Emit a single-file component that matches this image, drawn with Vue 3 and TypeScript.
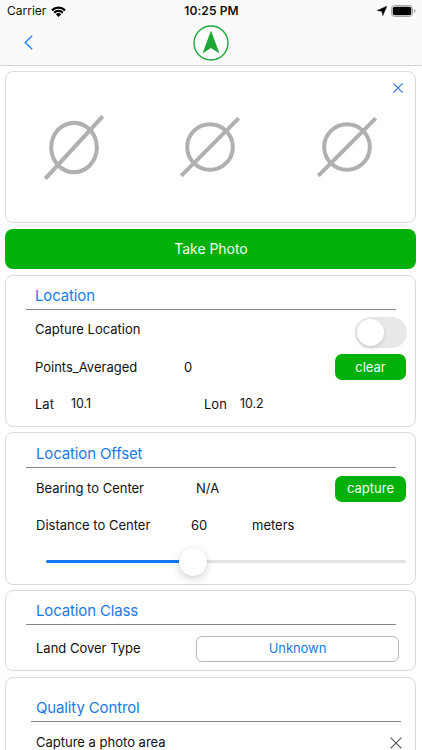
<script setup lang="ts">
import { ref } from 'vue'

const photos = [
  { id: 1, width: 60, height: 65 },
  { id: 2, width: 60, height: 60 },
  { id: 3, width: 60, height: 60 },
]
const captureLocation = ref(false)
const pointsAveraged = ref(0)
const lat = ref('10.1')
const lon = ref('10.2')
const bearing = ref('N/A')
const distance = ref(60)
const sliderPercent = ref(40.9)
const landCover = ref('Unknown')
</script>

<template>
  <div class="screen">
    <header class="header">
      <div class="status">
        <div class="carrier">
          <span>Carrier</span>
          <svg class="wifi" viewBox="0 0 15 11">
            <path d="M0.2 3.5A10.2 10.2 0 0 1 14.8 3.5L13.2 5.2A8 8 0 0 0 1.8 5.2Z" />
            <path d="M2.5 5.9A7 7 0 0 1 12.5 5.9L11 7.5A5 5 0 0 0 4 7.5Z" />
            <path d="M4.8 8.3A3.8 3.8 0 0 1 10.2 8.3L7.5 11Z" />
          </svg>
        </div>
        <div class="time">10:25 PM</div>
        <div class="indicators">
          <svg class="arrow" viewBox="0 0 10 10"><path d="M9.8 0.2L5.8 9.6L4.9 5.3L0.3 4.5Z" stroke="#000" stroke-width="0.5" /></svg>
          <svg class="battery" viewBox="0 0 25 12">
            <rect x="0.5" y="0.5" width="21" height="11" rx="3" fill="none" stroke="#a5a5a5" />
            <rect x="1.7" y="1.8" width="18.6" height="8.4" rx="1.8" fill="#000" />
            <path d="M23 4V8Q24.5 7.3 24.5 6T23 4Z" fill="#a0a0a0" />
          </svg>
        </div>
      </div>
      <nav class="nav">
        <svg class="back" viewBox="0 0 9 15"><path d="M8.2 0.8L1.2 7.5L8.2 14.2" /></svg>
        <svg class="logo" viewBox="0 0 36 36">
          <circle cx="18" cy="18" r="17" />
          <path d="M18 5.5L26.5 28.5L18 23L9.5 28.5Z" />
        </svg>
      </nav>
    </header>

    <main class="content">
      <section class="card photos">
        <div v-for="p in photos" :key="p.id" class="photo">
          <svg :width="p.width" :height="p.height" viewBox="0 0 60 60" preserveAspectRatio="none">
            <circle cx="30" cy="30" r="22.8" />
            <path d="M1.3 58.7L58.7 1.3" />
          </svg>
        </div>
        <svg class="close" viewBox="0 0 10 10"><path d="M0.4 0.4L9.6 9.6M9.6 0.4L0.4 9.6" /></svg>
      </section>

      <button class="take">Take Photo</button>

      <section class="card location">
        <h2 class="title">Location</h2>
        <div class="row toggle-row">
          <span class="label">Capture Location</span>
          <span class="toggle" :class="{ on: captureLocation }"><i></i></span>
        </div>
        <div class="row points-row">
          <span class="label">Points_Averaged</span>
          <span>{{ pointsAveraged }}</span>
          <button class="small">clear</button>
        </div>
        <div class="row coords">
          <span class="label">Lat</span><span class="num">{{ lat }}</span>
          <span>Lon</span><span class="num">{{ lon }}</span>
        </div>
      </section>

      <section class="card offset">
        <h2 class="title">Location Offset</h2>
        <div class="row bearing-row">
          <span class="label">Bearing to Center</span>
          <span>{{ bearing }}</span>
          <button class="small">capture</button>
        </div>
        <div class="row distance-row">
          <span class="label">Distance to Center</span>
          <span>{{ distance }}</span>
          <span>meters</span>
        </div>
        <div class="slider">
          <div class="fill" :style="{ width: sliderPercent + '%' }"></div>
          <div class="thumb"></div>
          <div class="rest"></div>
        </div>
      </section>

      <section class="card class-card">
        <h2 class="title">Location Class</h2>
        <div class="row class-row">
          <span class="label">Land Cover Type</span>
          <button class="select">{{ landCover }}</button>
        </div>
      </section>

      <section class="card quality">
        <h2 class="title">Quality Control</h2>
        <div class="row quality-row">
          <span class="label">Capture a photo area</span>
          <svg class="cross" viewBox="0 0 12 12"><path d="M0.6 0.6L11.4 11.4M11.4 0.6L0.6 11.4" /></svg>
        </div>
      </section>
    </main>
  </div>
</template>

<style>
body {
  margin: 0;
  overflow: hidden;
}
</style>

<style scoped>
* {
  box-sizing: border-box;
}
.screen {
  width: 422px;
  height: 750px;
  overflow: hidden;
  background: #fff;
  color: #111;
  font-family: Inter, 'Liberation Sans', sans-serif;
  font-size: 13px;
  line-height: 14px;
}
button {
  font: inherit;
  border: 0;
  padding: 0;
}
svg {
  display: block;
  flex: none;
}
.header {
  height: 66px;
  background: #fafafa;
  border-bottom: 1px solid #d4d4d4;
}
.status {
  display: grid;
  grid-template-columns: 1fr auto 1fr;
  height: 22px;
  padding: 0 6px 0 7px;
  align-items: center;
  font-size: 12px;
}
.carrier {
  display: flex;
  align-items: center;
  gap: 5px;
}
.wifi {
  width: 15px;
  height: 11px;
}
.time {
  font-weight: 600;
  letter-spacing: 0.1px;
}
.indicators {
  display: flex;
  justify-content: flex-end;
  align-items: center;
  gap: 4px;
}
.arrow {
  width: 10px;
  height: 10px;
}
.battery {
  width: 25px;
  height: 12px;
}
.nav {
  display: grid;
  grid-template-columns: 1fr 36px 1fr;
  align-items: center;
  height: 42px;
}
.back {
  width: 9px;
  height: 15px;
  margin: -2px 0 0 24px;
  fill: none;
  stroke: #1a7cf0;
  stroke-width: 1.3;
}
.logo {
  width: 36px;
  height: 36px;
}
.logo circle {
  fill: #fff;
  stroke: #1fa838;
  stroke-width: 1.4;
}
.logo path {
  fill: #1fa838;
}
.content {
  display: flex;
  flex-direction: column;
  padding: 5px 6px 0 5px;
  gap: 6px;
}
.card {
  border: 1px solid #dadada;
  border-radius: 8px;
  background: #fff;
  flex: none;
}
.photos {
  position: relative;
  height: 152px;
  display: grid;
  grid-template-columns: repeat(3, 1fr);
}
.photo {
  display: flex;
  align-items: center;
  justify-content: center;
}
.photo svg {
  fill: none;
  stroke: #b0b0b0;
  stroke-width: 4;
}
.close {
  position: absolute;
  top: 11px;
  right: 12px;
  width: 10px;
  height: 10px;
  stroke: #2b74d8;
  stroke-width: 1.2;
}
.take {
  height: 40px;
  flex: none;
  padding: 0 0 1px 1px;
  border-radius: 8px;
  background: #02b00a;
  color: #f2fff2;
  font-size: 14px;
  line-height: 17px;
  letter-spacing: -0.05px;
}
.title {
  margin: 0 19px 0 20px;
  padding: 10px 0 3px 9px;
  border-bottom: 1px solid #85858a;
  color: #1a7ae6;
  font-size: 15px;
  font-weight: 400;
  line-height: 20px;
  letter-spacing: -0.14px;
}
.row {
  display: grid;
  align-items: center;
  height: 37px;
  padding-left: 29px;
  white-space: nowrap;
}
.row span:not(.toggle) {
  padding-bottom: 2px;
}
.small {
  width: 71px;
  height: 26px;
  padding-bottom: 1px;
  border-radius: 7px;
  background: #02b00a;
  color: #f2fff2;
}
.location {
  height: 152px;
}
.toggle-row {
  grid-template-columns: 320px 52px;
  height: 39px;
}
.toggle {
  width: 52px;
  height: 31px;
  margin-top: 6px;
  padding: 2px;
  border-radius: 16px;
  background: #e8e8ea;
}
.toggle i {
  display: block;
  width: 27px;
  height: 27px;
  border-radius: 50%;
  background: #fff;
  box-shadow: 0 2px 4px rgba(0, 0, 0, 0.14);
}
.toggle.on {
  background: #02b00a;
}
.points-row {
  grid-template-columns: 149px 151px 71px;
}
.points-row .small {
  margin-bottom: 1px;
}
.coords {
  grid-template-columns: 36px 133px 36px 60px;
}
.row .num {
  font-size: 12.4px;
  padding-bottom: 1px;
}
.offset {
  height: 153px;
  margin-top: -1px;
}
.offset .title {
  padding: 11px 0 3px 10px;
}
.offset .row {
  padding-left: 30px;
}
.bearing-row {
  grid-template-columns: 160px 139px 71px;
  margin-top: 2px;
}
.distance-row {
  grid-template-columns: 155px 61px 60px;
}
.slider {
  display: flex;
  align-items: center;
  width: 360px;
  height: 35px;
  margin-left: 40px;
}
.fill {
  height: 3px;
  border-radius: 2px 0 0 2px;
  background: #1676ee;
}
.thumb {
  width: 28px;
  height: 28px;
  flex: none;
  margin: 0 -14px;
  z-index: 1;
  border-radius: 50%;
  background: #fff;
  box-shadow: 0 3px 8px rgba(0, 0, 0, 0.16), 0 0 2px rgba(0, 0, 0, 0.1);
}
.rest {
  flex: 1;
  height: 3px;
  border-radius: 2px;
  background: #e3e3e6;
}
.class-card {
  height: 81px;
  margin-top: -1px;
}
.class-card .title {
  padding-left: 10px;
}
.class-row {
  grid-template-columns: 160px 203px;
  height: 47px;
  padding-left: 30px;
}
.select {
  height: 26px;
  padding-bottom: 2px;
  border: 1px solid #b8b8bc;
  border-radius: 6px;
  background: #fff;
  color: #1a7ae6;
  letter-spacing: -0.05px;
}
.quality {
  height: 120px;
}
.quality .title {
  margin: 0 14px 0 25px;
  padding: 20px 0 3px 5px;
}
.quality-row {
  grid-template-columns: 354px 12px;
  height: 42px;
  padding-left: 30px;
}
.quality-row .label {
  padding-bottom: 0;
}
.cross {
  width: 12px;
  height: 12px;
  stroke: #606064;
  stroke-width: 1.3;
}
</style>
